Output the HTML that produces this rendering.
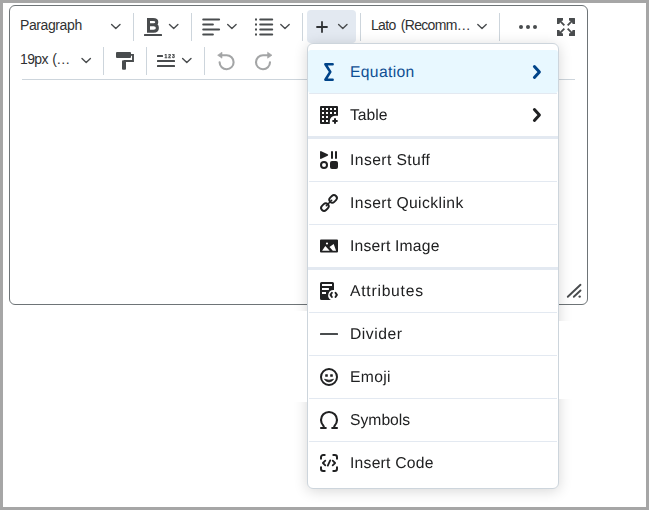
<!DOCTYPE html>
<html lang="en">
<head>
<meta charset="utf-8">
<title>Editor</title>
<style>
*{box-sizing:border-box;margin:0;padding:0}
html,body{width:649px;height:510px;overflow:hidden;background:#fff}
body{font-family:"Liberation Sans",sans-serif;color:#202122;position:relative}
.frame{position:absolute;left:0;top:0;width:649px;height:510px;border:3px solid #a6a6a6;pointer-events:none;z-index:50}
.editor{position:absolute;left:9px;top:5px;width:579px;height:300px;border:1px solid #6e7477;border-radius:6px;background:#fff}
.tbline{position:absolute;left:22px;top:79px;width:553px;height:1px;background:#cdd5dc}
.sep{position:absolute;width:1px;height:28px;background:#cdd5dc}
.r1{top:13px}.r2{top:47px}
.t{position:absolute;font-size:14px;line-height:20px;white-space:nowrap;color:#303132;letter-spacing:-0.4px}
.plusbtn{position:absolute;left:307px;top:10px;width:49px;height:33px;background:#e3e9f1;border-radius:4px}
svg.ov{position:absolute;left:0;top:0;width:649px;height:510px;overflow:visible;pointer-events:none;will-change:transform}
.menu{position:absolute;left:307px;top:43px;width:252px;height:446px;background:#fff;border:1px solid #cdd5dc;border-radius:6px;box-shadow:0 2px 14px rgba(0,0,0,.16);clip-path:inset(-14px -14px -14px -13px);z-index:10;list-style:none}
.mi{position:absolute;left:0;width:250px;height:43px;margin-top:1px}
.mi::before{content:"";position:absolute;left:1px;right:1px;top:0;height:1px;background:#e3e9f1}
.mi.hl{background:#e8f8ff;border-radius:3px}
.mi.hl::before{display:none}
.mi .lbl{position:absolute;left:42px;top:12px;font-size:15.7px;text-rendering:geometricPrecision;line-height:22px;white-space:nowrap;color:#202122}
.mi.hl .lbl{color:#0f4f93}
.patch{position:absolute;background:#fff;z-index:15}
.thick{position:absolute;left:0;width:250px;height:3px;margin-top:1px;background:#e3e9f1}
</style>
</head>
<body>
<div class="editor"></div>
<div class="tbline"></div>
<div class="sep r1" style="left:133px"></div>
<div class="sep r1" style="left:191px"></div>
<div class="sep r1" style="left:302px"></div>
<div class="sep r1" style="left:360px"></div>
<div class="sep r1" style="left:499px"></div>
<div class="sep r2" style="left:103px"></div>
<div class="sep r2" style="left:146px"></div>
<div class="sep r2" style="left:204px"></div>
<div class="plusbtn"></div>
<div class="t" id="t1" style="left:20px;top:15px">Paragraph</div>
<div class="t" id="t2" style="left:20px;top:49px;letter-spacing:-0.6px;word-spacing:1px">19px (…</div>
<div class="t" id="t3" style="left:371px;top:15px;letter-spacing:-0.68px;word-spacing:2px">Lato (Recomm…</div>

<svg class="ov" viewBox="0 0 649 510" style="z-index:5">
  <!-- toolbar chevrons -->
  <g fill="none" stroke="#494c4e" stroke-width="1.4" stroke-linecap="round" stroke-linejoin="round">
    <path d="M111.6 24.6l4.2 4 4.2-4"/>
    <path d="M169.5 24.6l4.2 4 4.2-4"/>
    <path d="M227.7 24.6l4.2 4 4.2-4"/>
    <path d="M280.8 24.6l4.2 4 4.2-4"/>
    <path d="M338.6 24.6l4.2 4 4.2-4"/>
    <path d="M477.8 24.6l4.2 4 4.2-4"/>
    <path d="M82 58.6l4.2 4 4.2-4"/>
    <path d="M182.6 58.6l4.2 4 4.2-4"/>
  </g>
  <!-- bold -->
  <g transform="translate(144 18)">
    <path d="M4.5 1.5h4.6c2.3 0 3.7.9 3.7 2.6 0 1.7-1.3 2.7-3.3 2.7H4.5zM4.5 6.8h5.2c2.4 0 3.7 1.1 3.7 3.1 0 2.2-1.5 3.3-3.9 3.3H4.5z" fill="none" stroke="#494c4e" stroke-width="3" stroke-linejoin="miter"/>
    <rect x="0" y="16" width="18" height="2" rx=".5" fill="#494c4e"/>
  </g>
  <!-- align left -->
  <g stroke="#494c4e" stroke-width="2" stroke-linecap="round" fill="none">
    <path d="M203.2 19.5h15.9M203.2 24.5h9.7M203.2 29.5h15.9M203.2 34.5h9.7"/>
  </g>
  <!-- list -->
  <g stroke="#494c4e" stroke-width="2" stroke-linecap="round" fill="none">
    <path d="M260.2 19.5h12M260.2 24.5h12M260.2 29.5h12M260.2 34.5h12"/>
  </g>
  <g fill="#494c4e">
    <rect x="255" y="18.5" width="2" height="2"/><rect x="255" y="23.5" width="2" height="2"/><rect x="255" y="28.5" width="2" height="2"/><rect x="255" y="33.5" width="2" height="2"/>
  </g>
  <!-- plus -->
  <path d="M317 27h10M322 22v10" stroke="#2f3235" stroke-width="1.8" stroke-linecap="round" fill="none"/>
  <!-- more -->
  <g fill="#494c4e"><circle cx="521" cy="27" r="2"/><circle cx="528" cy="27" r="2"/><circle cx="535" cy="27" r="2"/></g>
  <!-- fullscreen -->
  <g transform="translate(557 18)" fill="#494c4e">
    <path d="M0 .5a.5.5 0 0 1 .5-.5H6v2.4L4.3 3 8 6.7 6.7 8 3 4.3 2.4 6H0z"/>
    <path transform="translate(18 0) scale(-1 1)" d="M0 .5a.5.5 0 0 1 .5-.5H6v2.4L4.3 3 8 6.7 6.7 8 3 4.3 2.4 6H0z"/>
    <path transform="translate(0 18) scale(1 -1)" d="M0 .5a.5.5 0 0 1 .5-.5H6v2.4L4.3 3 8 6.7 6.7 8 3 4.3 2.4 6H0z"/>
    <path transform="translate(18 18) scale(-1 -1)" d="M0 .5a.5.5 0 0 1 .5-.5H6v2.4L4.3 3 8 6.7 6.7 8 3 4.3 2.4 6H0z"/>
  </g>
  <!-- paint roller -->
  <g transform="translate(116 52)">
    <rect x="0" y="0" width="15" height="6" rx="1" fill="#494c4e"/>
    <path d="M15 2.9H17V9H8" fill="none" stroke="#494c4e" stroke-width="1.9"/>
    <rect x="6" y="8.15" width="4" height="9.7" rx="1" fill="#494c4e"/>
  </g>
  <!-- line height -->
  <g transform="translate(157 52)">
    <rect x="0" y="3" width="6" height="2" rx=".5" fill="#494c4e"/>
    <rect x="0" y="8" width="18" height="2" rx=".5" fill="#494c4e"/>
    <rect x="0" y="13" width="18" height="2" rx=".5" fill="#494c4e"/>
    <g><text x="7.4" y="5.7" font-family="Liberation Sans, sans-serif" font-size="4.9" font-weight="bold" fill="#2c2f31" stroke="#494c4e" stroke-width=".25" letter-spacing="1.05">123</text></g>
  </g>
  <!-- resize handle -->
  <g fill="none" stroke="#494c4e" stroke-width="1.9" stroke-linecap="round">
    <path d="M567.8 296.8L580.5 284.8M573.8 296.8L580.5 290.5"/>
    <circle cx="579.7" cy="296.6" r="1.2" fill="#494c4e" stroke="none"/>
  </g>
  <!-- undo / redo -->
  <g opacity=".5">
    <path d="M222 55.2h4.6a7 7 0 1 1-7 7.1" fill="none" stroke="#494c4e" stroke-width="2.1" stroke-linecap="round"/>
    <path d="M217.6 55.2l4.4-3v6z" fill="#494c4e" stroke="#494c4e" stroke-width=".6" stroke-linejoin="round"/>
    <path d="M267.6 55.2h-4.6a7 7 0 1 0 7 7.1" fill="none" stroke="#494c4e" stroke-width="2.1" stroke-linecap="round"/>
    <path d="M272 55.2l-4.4-3v6z" fill="#494c4e" stroke="#494c4e" stroke-width=".6" stroke-linejoin="round"/>
  </g>
</svg>

<ul class="menu">
  <li class="mi hl" style="top:5px"><div class="lbl" id="m0" style="letter-spacing:0.34px">Equation</div></li>
  <li class="mi" style="top:48px"><div class="lbl" id="m1" style="letter-spacing:0px">Table</div></li>
  <li class="thick" style="top:91px"></li>
  <li class="mi" style="top:93px"><div class="lbl" id="m2" style="letter-spacing:0.4px">Insert Stuff</div></li>
  <li class="mi" style="top:136px"><div class="lbl" id="m3" style="letter-spacing:0.4px">Insert Quicklink</div></li>
  <li class="mi" style="top:179px"><div class="lbl" id="m4" style="letter-spacing:0.2px">Insert Image</div></li>
  <li class="thick" style="top:222px"></li>
  <li class="mi" style="top:224px"><div class="lbl" id="m5" style="letter-spacing:0.75px">Attributes</div></li>
  <li class="mi" style="top:267px"><div class="lbl" id="m6" style="letter-spacing:0.53px">Divider</div></li>
  <li class="mi" style="top:310px"><div class="lbl" id="m7" style="letter-spacing:0.3px">Emoji</div></li>
  <li class="mi" style="top:353px"><div class="lbl" id="m8" style="letter-spacing:0px">Symbols</div></li>
  <li class="mi" style="top:396px"><div class="lbl" id="m9" style="letter-spacing:0.24px">Insert Code</div></li>
</ul>

<div class="patch" style="left:270px;top:311px;width:37px;height:91px"></div>
<div class="patch" style="left:559px;top:321px;width:40px;height:78px"></div>
<svg class="ov" viewBox="0 0 649 510" style="z-index:20">
  <!-- sigma -->
  <path d="M332.6 64.2H325.4L330.3 71.9 325.4 79.7H332.6" fill="none" stroke="#004489" stroke-width="2.6" stroke-linejoin="round" stroke-linecap="round"/>
  <!-- submenu chevrons -->
  <path d="M534.4 66.5l5 5.5-5 5.5" fill="none" stroke="#004489" stroke-width="3" stroke-linecap="round" stroke-linejoin="round"/>
  <path d="M534.4 109.5l5 5.5-5 5.5" fill="none" stroke="#202122" stroke-width="3" stroke-linecap="round" stroke-linejoin="round"/>
  <!-- table -->
  <g transform="translate(320 106)">
    <path fill-rule="evenodd" fill="#202122" d="M1 0h16a1 1 0 0 1 1 1V9.8H15a5.2 5.2 0 0 0-5.2 5.2V18H1a1 1 0 0 1-1-1V1a1 1 0 0 1 1-1z
      M2 2v2h2V2z M6 2v2h2V2z M10 2v2h2V2z M14 2v2h2V2z
      M2 6v2h2V6z M6 6v2h2V6z M10 6v2h2V6z M14 6v2h2V6z
      M2 10v2h2v-2z M6 10v2h2v-2z
      M2 14v2h2v-2z M6 14v2h2v-2z"/>
    <path d="M13.1 15h3.8M15 13.1v3.8" stroke="#202122" stroke-width="2" stroke-linecap="round" fill="none"/>
  </g>
  <!-- insert stuff -->
  <g transform="translate(320 151)" fill="#202122">
    <path d="M.9.9L7.3 4 .9 7.1z" stroke="#202122" stroke-width="1.7" stroke-linejoin="round"/>
    <path d="M12 1v6M16 1v6" stroke="#202122" stroke-width="2" stroke-linecap="round" fill="none"/>
    <circle cx="4" cy="14" r="3" fill="none" stroke="#202122" stroke-width="2"/>
    <rect x="10" y="10" width="8" height="8" rx="2"/>
  </g>
  <!-- quicklink -->
  <g transform="translate(320 194)" fill="none" stroke="#202122" stroke-width="1.9" stroke-linecap="round">
    <rect x="-4.1" y="-2.9" width="8.2" height="5.8" rx="2.9" transform="translate(13.1 4.9) rotate(-45)"/>
    <rect x="-4.1" y="-2.9" width="8.2" height="5.8" rx="2.9" transform="translate(4.9 13.1) rotate(-45)"/>
    <path d="M6.3 11.7l5.4-5.4" stroke-width="1.5"/>
  </g>
  <!-- image -->
  <g transform="translate(320 237)">
    <path fill-rule="evenodd" fill="#202122" d="M1 2.5h16a1 1 0 0 1 1 1v11a1 1 0 0 1-1 1H1a1 1 0 0 1-1-1v-11a1 1 0 0 1 1-1z
      M7 5.4a1.1 1.1 0 1 0 0 2.2a1.1 1.1 0 1 0 0-2.2z
      M2.1 13.7l3.2-4.7l4.4 4.7z
      M9.5 10l4.2-3l2.4 6.7h-3.3z"/>
  </g>
  <!-- attributes -->
  <g transform="translate(320 282)">
    <path fill-rule="evenodd" fill="#202122" d="M1.5 0h11a1.5 1.5 0 0 1 1.5 1.5V8.12A5.3 5.3 0 0 0 10.87 18H1.5A1.5 1.5 0 0 1 0 16.5V1.5A1.5 1.5 0 0 1 1.5 0z
      M2 2v2h10V2z M2 6v2h6.9V6z M2 10v2h4v-2z"/>
    <path d="M11.9 10.8l-1.4 2.1 1.4 2.1M15.5 10.8l1.4 2.1-1.4 2.1" fill="none" stroke="#202122" stroke-width="1.9" stroke-linecap="round" stroke-linejoin="round"/>
  </g>
  <!-- divider -->
  <rect x="320" y="333" width="18" height="2" rx=".5" fill="#494c4e"/>
  <!-- emoji -->
  <g transform="translate(320 368)">
    <circle cx="9" cy="9" r="8" fill="none" stroke="#202122" stroke-width="2"/>
    <rect x="5.2" y="6.2" width="2.6" height="2.6" rx=".4" fill="#202122"/>
    <rect x="10.2" y="6.2" width="2.6" height="2.6" rx=".4" fill="#202122"/>
    <path d="M4.5 11.2q4.5 2.1 9 0q-1.5 2.7-4.5 2.7t-4.5-2.7z" fill="#202122" stroke="#202122" stroke-width=".8" stroke-linejoin="round"/>
  </g>
  <!-- symbols (omega) -->
  <g transform="translate(320 411)" fill="none" stroke="#202122" stroke-width="2.1" stroke-linecap="round" stroke-linejoin="round">
    <path d="M1 17H5.8M4 16.8Q3.9 15.5 3.4 14.7A8 8 0 1 1 14.6 14.7Q14.1 15.5 14 16.8M12.2 17H17"/>
  </g>
  <!-- insert code -->
  <g transform="translate(320 454)" fill="none" stroke="#202122" stroke-linecap="round" stroke-linejoin="round">
    <path stroke-width="2" d="M1 4.7V3.2A2.2 2.2 0 0 1 3.2 1H4.7M13.3 1H14.8A2.2 2.2 0 0 1 17 3.2V4.7M17 13.3V14.8A2.2 2.2 0 0 1 14.8 17H13.3M4.7 17H3.2A2.2 2.2 0 0 1 1 14.8V13.3"/>
    <path stroke-width="1.8" d="M5.3 6.6L2.9 9l2.4 2.4M12.7 6.6L15.1 9l-2.4 2.4M10.2 6.4l-2.4 5.2"/>
  </g>
</svg>
<div class="frame"></div>
</body>
</html>
